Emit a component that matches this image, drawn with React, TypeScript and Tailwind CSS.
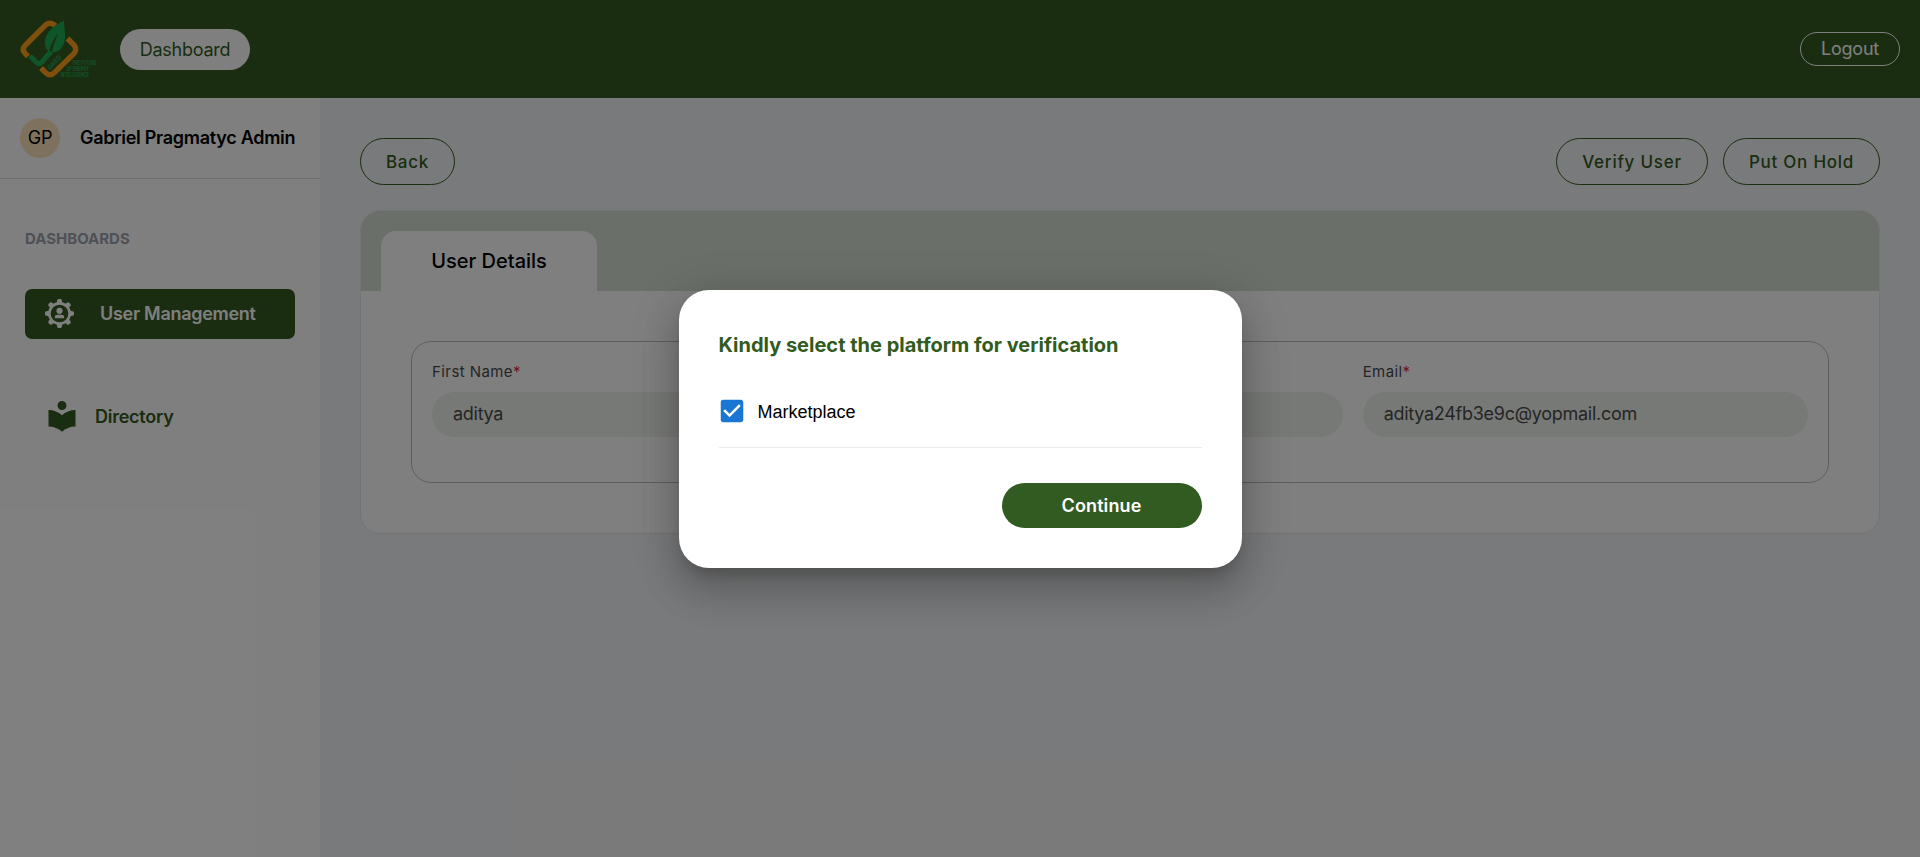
import React from "react";
import { MdLocalLibrary } from "react-icons/md";

function Logo() {
  return (
    <svg className="h-[60px] w-20 shrink-0 overflow-visible" viewBox="0 0 80 60" fill="none">
      <path d="M8 37.500 5 34.200Q1.500 30.500 5 26.500L25.500 6Q30 2.500 34 5.700L35.500 7" stroke="#ff9f1a" strokeWidth="5.400" />
      <path d="M47.500 19.500 54 26Q57.500 30.500 54 34.500L34 54Q30 57.500 26 54L21 49" stroke="#ff9f1a" strokeWidth="5.400" />
      <path d="M44 1.500C35 6 26 12 25 22 24.500 27 26 30 29 32.500 31 25 34 19 38 15 35.500 21 33 27 31.500 33.500 39 34 44 28 45 20 45.500 14 44 8 44 1.500Z" fill="#20a852" />
      <path d="M10 37 17 43.800Q19 45.500 21.500 43.500L31 32.500" stroke="#20a852" strokeWidth="5" />
      <text x="0" y="0" transform="translate(30 51) rotate(-45)" fill="#20a852" fontSize="6.500" fontWeight="700" fontFamily="Inter, sans-serif" textLength="17" lengthAdjust="spacingAndGlyphs">GAED</text>
      <g fill="#20a04c" fontSize="5.500" fontWeight="800" fontFamily="Inter, sans-serif">
        <text x="52" y="45.500" textLength="24.500" lengthAdjust="spacingAndGlyphs">THE FUTURE</text>
        <text x="46.500" y="52" textLength="22.500" lengthAdjust="spacingAndGlyphs">OF ENERGY</text>
        <text x="40.500" y="58.300" textLength="28.500" lengthAdjust="spacingAndGlyphs">INTELLIGENCE</text>
      </g>
    </svg>
  );
}

function GearUser() {
  return (
    <svg className="mb-px size-[29px]" viewBox="0 0 30 30">
      <g fill="#fff">
        {[0, 45, 90, 135, 180, 225, 270, 315].map((a) => (
          <path key={a} d="M12.100 4.500 12.600 1.300Q12.800 0 14.200 0h1.600Q17.200 0 17.400 1.300L17.900 4.500Z" transform={`rotate(${a} 15 15)`} />
        ))}
      </g>
      <circle cx="15" cy="15" r="10.500" fill="none" stroke="#fff" strokeWidth="2.700" />
      <circle cx="15" cy="12.200" r="3.200" fill="#fff" />
      <path d="M10.200 20v-1.100q0-2.500 3-2.500h3.600q3 0 3 2.500v1.100Z" fill="#fff" />
    </svg>
  );
}

function Field({ label, value }: { label: string; value: string }) {
  return (
    <div className="flex flex-1 flex-col">
      <label className="text-[15px] leading-5 tracking-[0.42px] text-[#4b4b4b]">
        {label}
        <span className="text-[#dc2f3f]">*</span>
      </label>
      <div className="mt-[10px] flex h-[45px] items-center rounded-[22.500px] bg-[#eff2ed] px-[21px] pb-px text-lg tracking-[-0.28px] text-[#4b4b4b]">{value}</div>
    </div>
  );
}

const outline = "flex h-[47px] items-center justify-center rounded-[23.500px] border border-[#335b21] pt-0.5 text-[17px] font-medium tracking-[0.75px] text-[#335b21]";

export default function App() {
  return (
    <div className="relative flex h-[857px] w-full flex-col overflow-hidden bg-[#f3f4f6] font-[Inter,sans-serif]">
      <header className="flex h-[98px] shrink-0 items-center bg-[#345a22] pr-5 pl-5">
        <Logo />
        <button className="ml-5 flex h-[41px] w-[130px] items-center justify-center rounded-full bg-white pt-px text-lg tracking-[-0.25px] text-[#335b21]">Dashboard</button>
        <button className="ml-auto flex h-[34px] w-[100px] items-center justify-center rounded-full border border-white text-lg tracking-[-0.2px] text-white">Logout</button>
      </header>
      <div className="flex flex-1">
        <aside className="w-80 shrink-0 bg-white">
          <div className="flex h-[81px] items-center border-b border-[#dcdcdc] pl-5">
            <div className="flex size-10 items-center justify-center rounded-full bg-[#fde3bb] text-lg tracking-[-0.25px]">GP</div>
            <span className="ml-5 text-lg font-semibold tracking-[-0.28px] whitespace-nowrap">Gabriel Pragmatyc Admin</span>
          </div>
          <div className="mt-[49px] pl-[25px] text-[15px] leading-[22px] font-bold text-[#9ca3af]">DASHBOARDS</div>
          <div className="mx-[25px] mt-[39px] flex h-[50px] items-center rounded-[7px] bg-[#345a22] pl-5 text-lg font-semibold tracking-[-0.28px] text-white">
            <GearUser />
            <span className="ml-[26px]">User Management</span>
          </div>
          <div className="mx-[25px] mt-[53px] flex h-[50px] items-center pl-[19px] text-lg font-semibold tracking-[-0.25px] text-[#335b21]">
            <MdLocalLibrary className="mb-0.5 size-9" />
            <span className="ml-[15px]">Directory</span>
          </div>
        </aside>
        <main className="flex-1 px-10 pt-10">
          <div className="flex">
            <button className={outline + " w-[95px]"}>Back</button>
            <button className={outline + " ml-auto w-[152px]"}>Verify User</button>
            <button className={outline + " ml-[15px] w-[157px]"}>Put On Hold</button>
          </div>
          <section className="mt-[25px] h-[324px] overflow-hidden rounded-[20px] border border-[#e5e7eb] bg-white">
            <div className="flex h-20 items-end bg-[#d6ded3] pl-5">
              <div className="flex h-[60px] w-[216px] items-center justify-center rounded-t-[15px] bg-white text-xl font-medium">User Details</div>
            </div>
            <div className="mx-[50px] mt-[50px] flex h-[142px] gap-5 rounded-[20px] border border-[#bdbdbd] px-5 pt-5">
              <Field label="First Name" value="aditya" />
              <Field label="Last Name" value="" />
              <Field label="Email" value="aditya24fb3e9c@yopmail.com" />
            </div>
          </section>
        </main>
      </div>
      <div className="absolute inset-0 flex items-center justify-center bg-black/50">
        <div className="flex h-[278px] w-[563px] flex-col rounded-[30px] bg-white px-10 pt-10 shadow-[0px_11px_15px_-7px_rgba(0,0,0,0.2),0px_24px_38px_3px_rgba(0,0,0,0.14),0px_9px_46px_8px_rgba(0,0,0,0.12)]">
          <h2 className="text-xl leading-[30px] font-bold whitespace-nowrap text-[#315b20]">Kindly select the platform for verification</h2>
          <div className="mt-[39px] flex h-6 items-center">
            <svg className="-ml-0.5 size-[30px] shrink-0" viewBox="0 0 24 24" fill="#1976d2">
              <path d="M19 3H5c-1.110 0-2 .9-2 2v14c0 1.100.89 2 2 2h14c1.110 0 2-.9 2-2V5c0-1.100-.89-2-2-2zm-9 14l-5-5 1.410-1.410L10 14.170l7.590-7.590L19 8l-9 9z" />
            </svg>
            <span className="ml-[11px] pt-[3px] font-['Liberation_Sans',sans-serif] text-lg">Marketplace</span>
          </div>
          <div className="mt-6 h-px shrink-0 bg-[#ebebeb]" />
          <button className="mt-[35px] h-[45px] w-[200px] self-end rounded-full bg-[#315b20] pt-0.5 text-lg font-semibold tracking-[0.1px] text-white">Continue</button>
        </div>
      </div>
    </div>
  );
}
